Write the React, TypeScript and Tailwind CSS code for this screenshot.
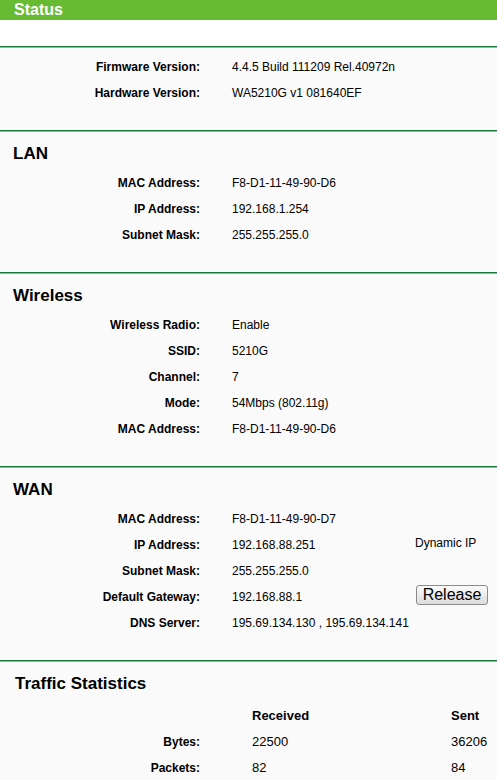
import React from 'react';

type Row = { label: string; value: string; extra?: React.ReactNode };

function Divider() {
  return (
    <div>
      <div className="h-px bg-[#17793a]" />
      <div className="h-px bg-[#7cc394]" />
    </div>
  );
}

function InfoRow({ label, value, extra }: Row) {
  return (
    <div className="flex items-center h-[26px] pt-[2px]">
      <div className="w-[200px] text-right font-bold">{label}</div>
      <div className="pl-[32px] w-[183px] whitespace-nowrap">{value}</div>
      <div className="flex-1 flex items-center">{extra}</div>
    </div>
  );
}

function Section({ title, rows }: { title: string; rows: Row[] }) {
  return (
    <div>
      <Divider />
      <div className="pt-[9px] pb-[25px]">
        <h2 className="pl-[13px] h-[22px] pt-[2px] leading-[22px] text-[17px] font-bold">{title}</h2>
        <div className="mt-[6px]">
          {rows.map((r) => (
            <InfoRow key={r.label} {...r} />
          ))}
        </div>
      </div>
    </div>
  );
}

export default function App() {
  const lan: Row[] = [
    { label: 'MAC Address:', value: 'F8-D1-11-49-90-D6' },
    { label: 'IP Address:', value: '192.168.1.254' },
    { label: 'Subnet Mask:', value: '255.255.255.0' },
  ];

  const wireless: Row[] = [
    { label: 'Wireless Radio:', value: 'Enable' },
    { label: 'SSID:', value: '5210G' },
    { label: 'Channel:', value: '7' },
    { label: 'Mode:', value: '54Mbps (802.11g)' },
    { label: 'MAC Address:', value: 'F8-D1-11-49-90-D6' },
  ];

  const wan: Row[] = [
    { label: 'MAC Address:', value: 'F8-D1-11-49-90-D7' },
    {
      label: 'IP Address:',
      value: '192.168.88.251',
      extra: <span className="pl-[32px] -mt-[4px]">Dynamic IP</span>,
    },
    { label: 'Subnet Mask:', value: '255.255.255.0' },
    {
      label: 'Default Gateway:',
      value: '192.168.88.1',
      extra: (
        <button className="ml-[33px] -mt-[4px] h-[20px] w-[72px] rounded-[3px] border border-[#8a8a8a] bg-gradient-to-b from-[#fbfbfb] to-[#dcdcdc] text-[16px] leading-[18px] text-black">
          Release
        </button>
      ),
    },
    { label: 'DNS Server:', value: '195.69.134.130 , 195.69.134.141' },
  ];

  return (
    <div className="w-[497px] h-[780px] overflow-hidden bg-[#fafafa] text-[12px] text-black font-['Liberation_Sans',Arial,sans-serif]">
      <div className="h-[20px] bg-[#66bb33] pl-[14px] text-[16px] leading-[19px] font-bold text-white">
        Status
      </div>
      <div className="h-[26px] bg-white" />

      <Divider />
      <div className="pt-[5px] pb-[25px]">
        <InfoRow label="Firmware Version:" value="4.4.5 Build 111209 Rel.40972n" />
        <InfoRow label="Hardware Version:" value="WA5210G v1 081640EF" />
      </div>

      <Section title="LAN" rows={lan} />
      <Section title="Wireless" rows={wireless} />
      <Section title="WAN" rows={wan} />

      <Divider />
      <div className="pt-[9px]">
        <h2 className="pl-[15px] h-[22px] pt-[2px] leading-[22px] text-[17px] font-bold">Traffic Statistics</h2>
        <div className="mt-[9px] text-[13px]">
          <div className="flex items-center h-[26px] pt-[2px] font-bold">
            <div className="w-[200px]" />
            <div className="pl-[52px] w-[251px]">Received</div>
            <div>Sent</div>
          </div>
          {[
            ['Bytes:', '22500', '36206'],
            ['Packets:', '82', '84'],
          ].map(([label, rx, tx]) => (
            <div key={label} className="flex items-center h-[26px] pt-[2px]">
              <div className="w-[200px] text-right font-bold text-[12px]">{label}</div>
              <div className="pl-[52px] w-[251px]">{rx}</div>
              <div>{tx}</div>
            </div>
          ))}
        </div>
      </div>
    </div>
  );
}
